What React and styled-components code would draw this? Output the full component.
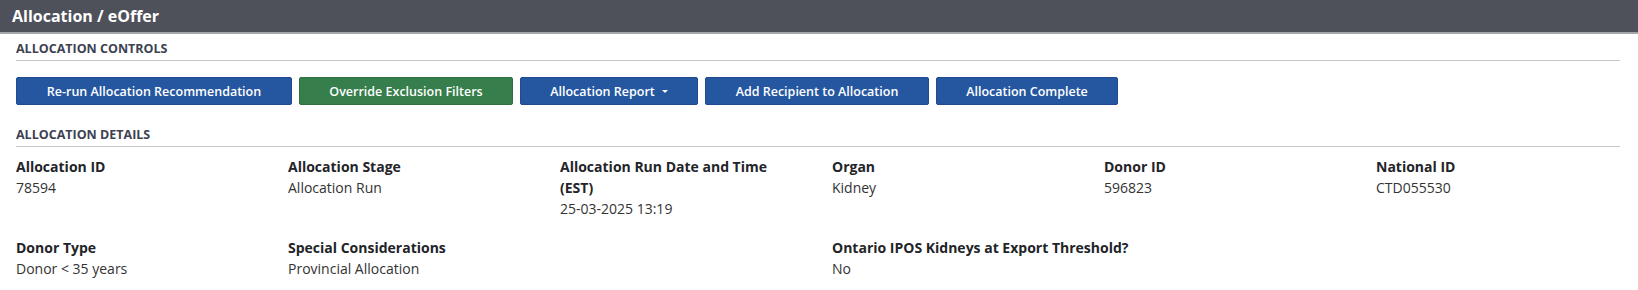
import styled, { createGlobalStyle } from "styled-components";

const GlobalStyle = createGlobalStyle`
  body {
    margin: 0;
    background: #ffffff;
    font-family: "Open Sans", "Noto Sans", sans-serif;
    color: #212529;
  }
`;

const controls = [
  { label: "Re-run Allocation Recommendation", width: 276 },
  { label: "Override Exclusion Filters", width: 214, variant: "success" },
  { label: "Allocation Report", width: 178, caret: true },
  { label: "Add Recipient to Allocation", width: 224 },
  { label: "Allocation Complete", width: 182 },
];

const details = [
  { label: "Allocation ID", value: "78594" },
  { label: "Allocation Stage", value: "Allocation Run" },
  { label: "Allocation Run Date and Time (EST)", value: "25-03-2025 13:19" },
  { label: "Organ", value: "Kidney" },
  { label: "Donor ID", value: "596823" },
  { label: "National ID", value: "CTD055530" },
  { label: "Donor Type", value: "Donor < 35 years" },
  { label: "Special Considerations", value: "Provincial Allocation" },
  { label: "", value: "" },
  { label: "Ontario IPOS Kidneys at Export Threshold?", value: "No", wide: true },
];

const App = () => {
  return (
    <>
      <GlobalStyle />
      <Page>
        <Header>Allocation / eOffer</Header>
        <Content>
          <SectionTitle>Allocation Controls</SectionTitle>
          <ButtonRow>
            {controls.map((item) => (
              <ActionButton
                key={item.label}
                $variant={item.variant}
                style={{ width: item.width }}
              >
                {item.label}
                {item.caret && <Caret />}
              </ActionButton>
            ))}
          </ButtonRow>
          <SectionTitle $spaced>Allocation Details</SectionTitle>
          <DetailsGrid>
            {details.map((item, i) => (
              <Field key={i} $wide={item.wide}>
                {item.label && <FieldLabel>{item.label}</FieldLabel>}
                {item.value && <FieldValue>{item.value}</FieldValue>}
              </Field>
            ))}
          </DetailsGrid>
        </Content>
      </Page>
    </>
  );
};

const Page = styled.div`
  width: 1638px;
  height: 290px;
  overflow: hidden;
`;

const Header = styled.div`
  height: 32px;
  display: flex;
  align-items: center;
  padding: 0 12px;
  background-color: #4e5159;
  border-bottom: 2px solid #a3a6ab;
  color: #ffffff;
  font-size: 16px;
  font-weight: 700;
`;

const Content = styled.div`
  padding: 7px 18px 0 16px;
`;

const SectionTitle = styled.div`
  margin-top: ${(p) => (p.$spaced ? "22px" : "0")};
  padding-bottom: 3px;
  border-bottom: 1px solid #c3c7cc;
  font-size: 12.5px;
  line-height: 16px;
  font-weight: 700;
  text-transform: uppercase;
  color: #3e4152;
`;

const ButtonRow = styled.div`
  display: flex;
  gap: 7px;
  margin-top: 16px;
`;

const ActionButton = styled.button`
  height: 28px;
  display: inline-flex;
  align-items: center;
  justify-content: center;
  gap: 7px;
  padding: 0 8px;
  border: 1px solid ${(p) => (p.$variant === "success" ? "#2f7042" : "#204c8f")};
  border-radius: 2px;
  background-color: ${(p) => (p.$variant === "success" ? "#367e4b" : "#2557a1")};
  color: #ffffff;
  font-family: "Open Sans", "Noto Sans", sans-serif;
  font-size: 12.5px;
  font-weight: 600;
  white-space: nowrap;
  cursor: pointer;
`;

const Caret = styled.span`
  width: 0;
  height: 0;
  margin-top: 1px;
  border-left: 3px solid transparent;
  border-right: 3px solid transparent;
  border-top: 3px solid #ffffff;
`;

const DetailsGrid = styled.div`
  display: grid;
  grid-template-columns: repeat(6, 272px);
  row-gap: 18px;
  padding-top: 9px;
`;

const Field = styled.div`
  grid-column: ${(p) => (p.$wide ? "span 2" : "auto")};
  padding-right: 30px;
  font-size: 14px;
  line-height: 21px;
`;

const FieldLabel = styled.div`
  font-weight: 700;
  color: #222428;
`;

const FieldValue = styled.div`
  font-weight: 400;
  color: #333333;
`;

export default App;
